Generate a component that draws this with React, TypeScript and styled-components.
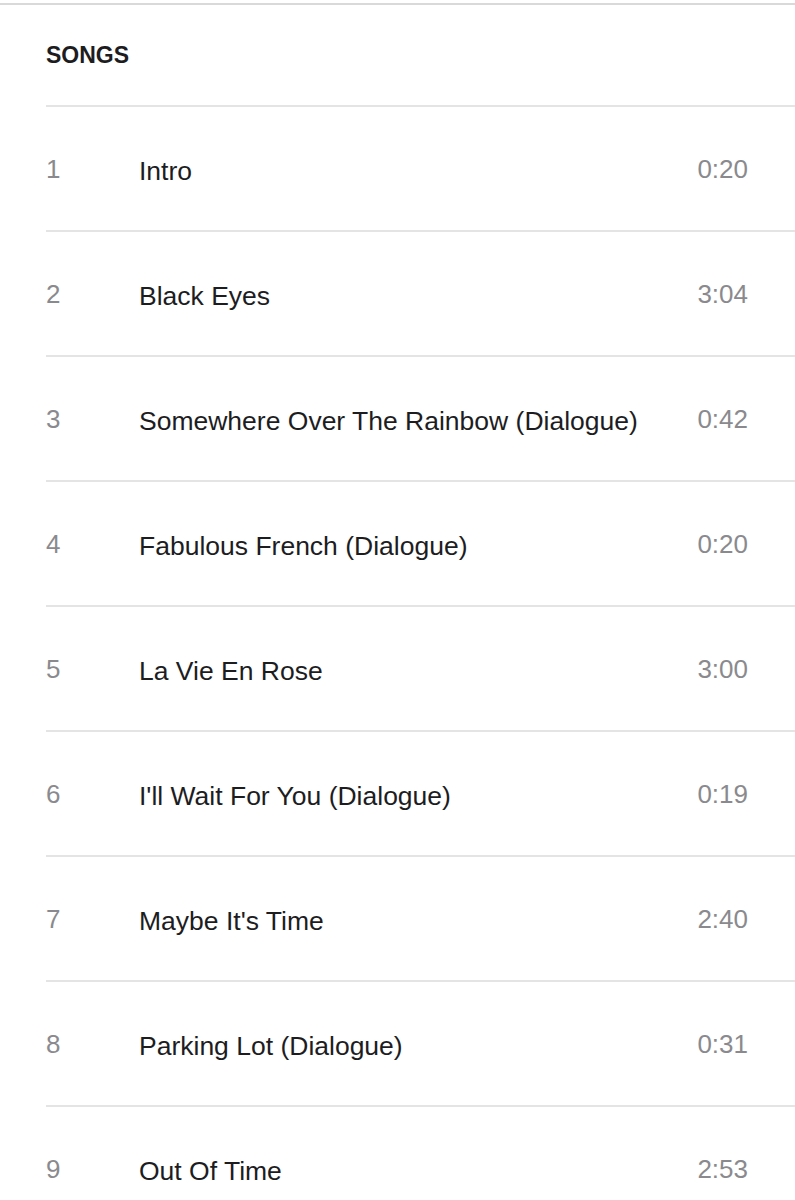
import React from 'react';
import styled, { createGlobalStyle } from 'styled-components';

type Song = {
  title: string;
  duration: string;
};

const songs: Song[] = [
  { title: 'Intro', duration: '0:20' },
  { title: 'Black Eyes', duration: '3:04' },
  { title: 'Somewhere Over The Rainbow (Dialogue)', duration: '0:42' },
  { title: 'Fabulous French (Dialogue)', duration: '0:20' },
  { title: 'La Vie En Rose', duration: '3:00' },
  { title: "I'll Wait For You (Dialogue)", duration: '0:19' },
  { title: "Maybe It's Time", duration: '2:40' },
  { title: 'Parking Lot (Dialogue)', duration: '0:31' },
  { title: 'Out Of Time', duration: '2:53' },
];

const GlobalStyle = createGlobalStyle`
  html, body {
    margin: 0;
    padding: 0;
    background: #ffffff;
  }
  body {
    font-family: 'Liberation Sans', Arial, Helvetica, sans-serif;
    -webkit-font-smoothing: antialiased;
  }
`;

/**
 * ### Track list of an album
 */
const App: React.FC = () => {
  return (
    <>
      <GlobalStyle />
      <SongsSection className="songs">
        <h2 className="songs__title">SONGS</h2>
        <ul className="songs__list">
          {songs.map((song, index) => (
            <li className="song-row" key={song.title}>
              <span className="song-row__number">{index + 1}</span>
              <span className="song-row__title">{song.title}</span>
              <span className="song-row__duration">{song.duration}</span>
            </li>
          ))}
        </ul>
      </SongsSection>
    </>
  );
};

const SongsSection = styled.section`
  &.songs {
    & {
      margin-top: 3px;
      border-top: 2px solid #d9d9d9;
      overflow: hidden;
    }

    .songs__title {
      margin: 0;
      padding: 37px 0 37px 46px;
      font-size: 23px;
      line-height: 26px;
      font-weight: bold;
      color: #1d1d1f;
    }

    .songs__list {
      margin: 0 0 0 46px;
      padding: 0;
      list-style: none;
    }

    .song-row {
      display: flex;
      align-items: flex-start;
      padding: 49px 47px 44px 0;
      border-top: 2px solid #e4e4e4;
    }

    .song-row__number {
      flex: 0 0 93px;
      font-size: 26px;
      line-height: 26px;
      color: #8a8a8e;
    }

    .song-row__title {
      flex: 1;
      font-size: 26.5px;
      line-height: 30px;
      color: #1d1d1f;
      white-space: nowrap;
    }

    .song-row__duration {
      font-size: 26px;
      line-height: 26px;
      color: #8a8a8e;
    }
  }
`;

export default App;
